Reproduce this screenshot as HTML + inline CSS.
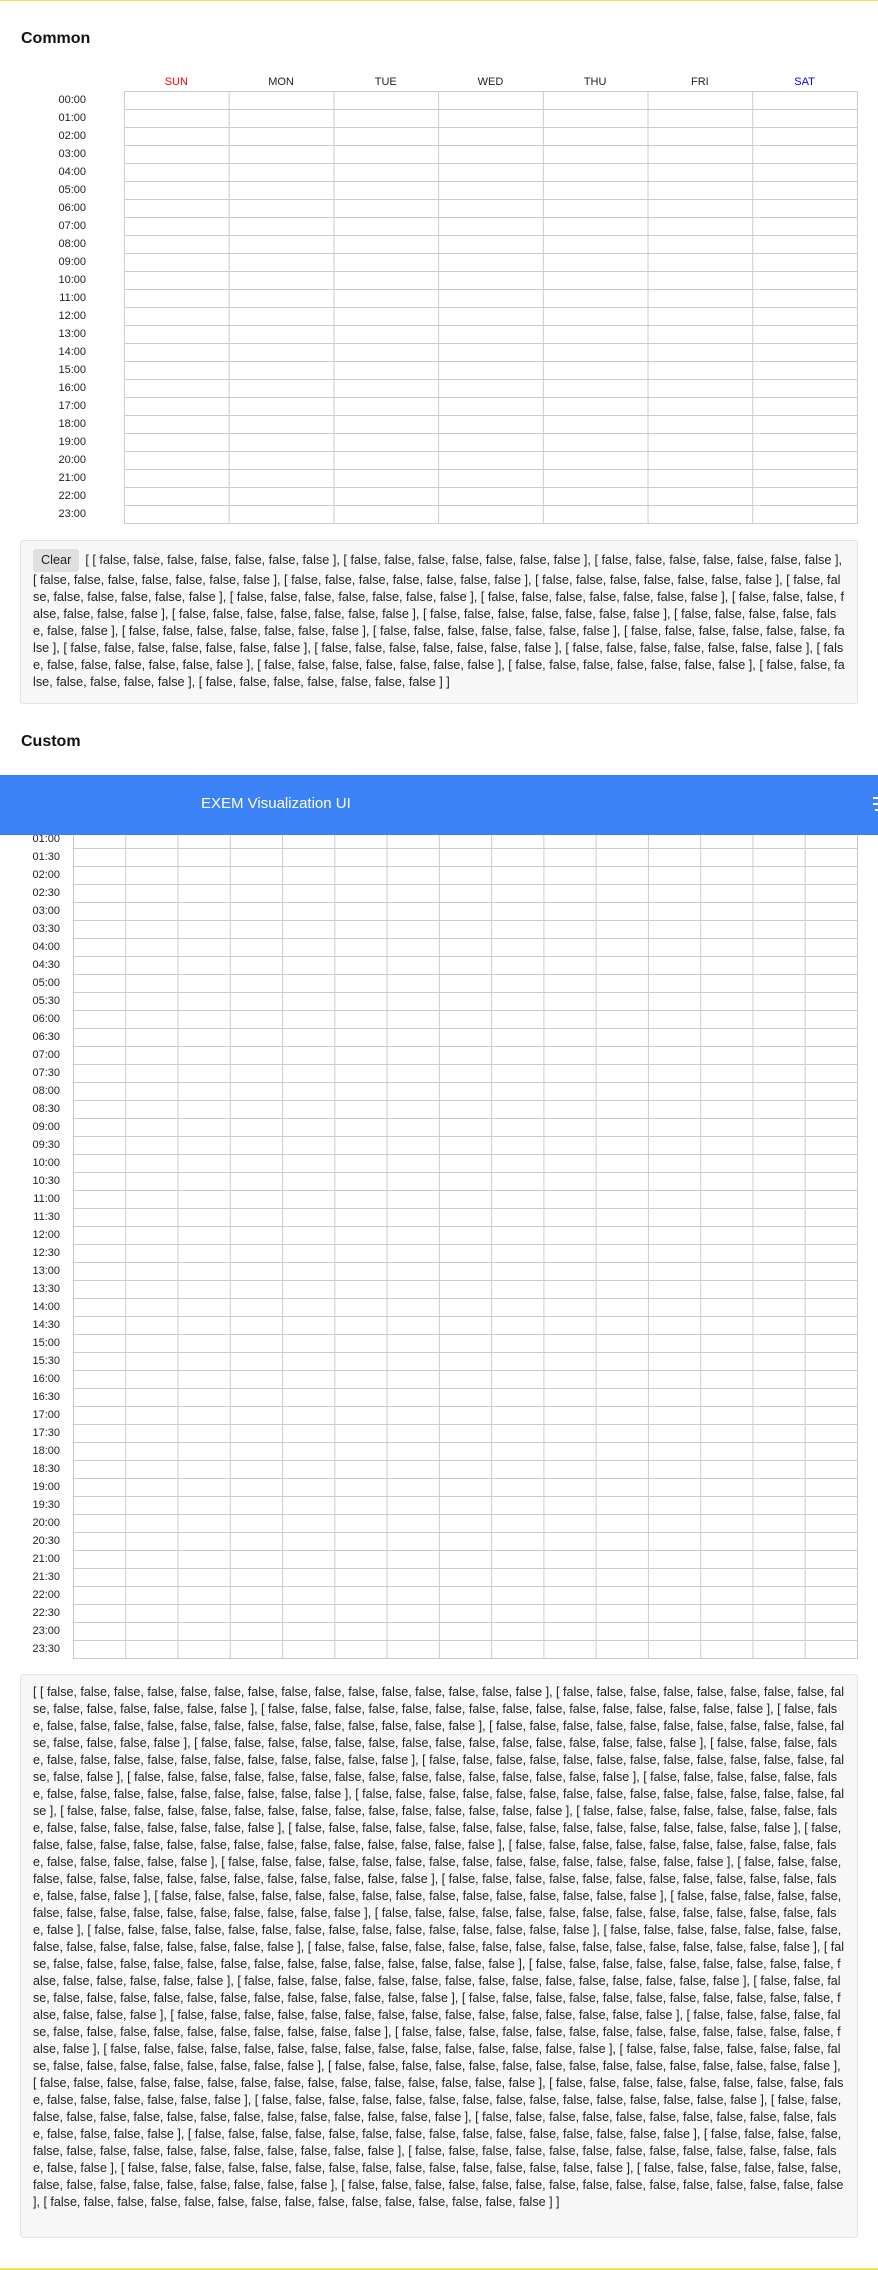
<!DOCTYPE html>
<html><head><meta charset="utf-8"><style>
*{margin:0;padding:0;box-sizing:border-box}
body{width:878px;height:2270px;position:relative;background:#fff;font-family:"Liberation Sans",sans-serif;color:#222;overflow:hidden}
.yl{position:absolute;left:0;width:878px;background:#f7e15a}
h3{position:absolute;left:21px;font-size:16px;font-weight:bold;color:#111;line-height:18px}
.grid{position:absolute;border-right:1px solid #ccc;border-bottom:1px solid #ccc;
background-image:linear-gradient(to right,#ccc 1px,transparent 1px),linear-gradient(to bottom,#ccc 1px,transparent 1px)}
.lab{position:absolute;left:0;font-size:11px;height:18px;line-height:18px;text-align:right;color:#222}
.day{position:absolute;top:74px;width:104.7px;text-align:center;font-size:11px;line-height:16px}
.box{position:absolute;left:20px;width:838px;background:#f7f7f7;border:1px solid #e3e3e3;border-radius:3px;font-size:12.7px;line-height:17px;word-break:break-all;color:#222}
.btn{display:inline-block;background:#e0e0e0;border-radius:3px;padding:0 8px;height:23px;line-height:23px;font-size:12.7px;margin-right:6px;vertical-align:middle}
</style></head><body>
<div class="yl" style="top:0;height:1px"></div>
<h3 style="top:30px">Common</h3>
<div class="day" style="left:124px;color:#f00">SUN</div>
<div class="day" style="left:228.7px">MON</div>
<div class="day" style="left:333.4px">TUE</div>
<div class="day" style="left:438.1px">WED</div>
<div class="day" style="left:542.8px">THU</div>
<div class="day" style="left:647.5px">FRI</div>
<div class="day" style="left:752.2px;color:#00f">SAT</div>
<div class="grid" style="left:124px;top:91px;width:734px;height:433px;background-size:104.71px 100%,100% 18px"></div>
<div style="position:absolute;left:0;top:91px;width:86px">
<div class="lab" style="position:static;width:86px">00:00</div><div class="lab" style="position:static;width:86px">01:00</div><div class="lab" style="position:static;width:86px">02:00</div><div class="lab" style="position:static;width:86px">03:00</div><div class="lab" style="position:static;width:86px">04:00</div><div class="lab" style="position:static;width:86px">05:00</div><div class="lab" style="position:static;width:86px">06:00</div><div class="lab" style="position:static;width:86px">07:00</div><div class="lab" style="position:static;width:86px">08:00</div><div class="lab" style="position:static;width:86px">09:00</div><div class="lab" style="position:static;width:86px">10:00</div><div class="lab" style="position:static;width:86px">11:00</div><div class="lab" style="position:static;width:86px">12:00</div><div class="lab" style="position:static;width:86px">13:00</div><div class="lab" style="position:static;width:86px">14:00</div><div class="lab" style="position:static;width:86px">15:00</div><div class="lab" style="position:static;width:86px">16:00</div><div class="lab" style="position:static;width:86px">17:00</div><div class="lab" style="position:static;width:86px">18:00</div><div class="lab" style="position:static;width:86px">19:00</div><div class="lab" style="position:static;width:86px">20:00</div><div class="lab" style="position:static;width:86px">21:00</div><div class="lab" style="position:static;width:86px">22:00</div><div class="lab" style="position:static;width:86px">23:00</div>
</div>
<div class="box" style="top:540px;height:164px;padding:8px 12px 0 12px"><span class="btn">Clear</span>[ [ false, false, false, false, false, false, false ], [ false, false, false, false, false, false, false ], [ false, false, false, false, false, false, false ], [ false, false, false, false, false, false, false ], [ false, false, false, false, false, false, false ], [ false, false, false, false, false, false, false ], [ false, false, false, false, false, false, false ], [ false, false, false, false, false, false, false ], [ false, false, false, false, false, false, false ], [ false, false, false, false, false, false, false ], [ false, false, false, false, false, false, false ], [ false, false, false, false, false, false, false ], [ false, false, false, false, false, false, false ], [ false, false, false, false, false, false, false ], [ false, false, false, false, false, false, false ], [ false, false, false, false, false, false, false ], [ false, false, false, false, false, false, false ], [ false, false, false, false, false, false, false ], [ false, false, false, false, false, false, false ], [ false, false, false, false, false, false, false ], [ false, false, false, false, false, false, false ], [ false, false, false, false, false, false, false ], [ false, false, false, false, false, false, false ], [ false, false, false, false, false, false, false ] ]</div>
<h3 style="top:733px">Custom</h3>
<div class="grid" style="left:73px;top:794px;width:785px;height:865px;background-size:52.27px 100%,100% 18px"></div>
<div style="position:absolute;left:0;top:830px;width:60px">
<div class="lab" style="position:static;width:60px">01:00</div><div class="lab" style="position:static;width:60px">01:30</div><div class="lab" style="position:static;width:60px">02:00</div><div class="lab" style="position:static;width:60px">02:30</div><div class="lab" style="position:static;width:60px">03:00</div><div class="lab" style="position:static;width:60px">03:30</div><div class="lab" style="position:static;width:60px">04:00</div><div class="lab" style="position:static;width:60px">04:30</div><div class="lab" style="position:static;width:60px">05:00</div><div class="lab" style="position:static;width:60px">05:30</div><div class="lab" style="position:static;width:60px">06:00</div><div class="lab" style="position:static;width:60px">06:30</div><div class="lab" style="position:static;width:60px">07:00</div><div class="lab" style="position:static;width:60px">07:30</div><div class="lab" style="position:static;width:60px">08:00</div><div class="lab" style="position:static;width:60px">08:30</div><div class="lab" style="position:static;width:60px">09:00</div><div class="lab" style="position:static;width:60px">09:30</div><div class="lab" style="position:static;width:60px">10:00</div><div class="lab" style="position:static;width:60px">10:30</div><div class="lab" style="position:static;width:60px">11:00</div><div class="lab" style="position:static;width:60px">11:30</div><div class="lab" style="position:static;width:60px">12:00</div><div class="lab" style="position:static;width:60px">12:30</div><div class="lab" style="position:static;width:60px">13:00</div><div class="lab" style="position:static;width:60px">13:30</div><div class="lab" style="position:static;width:60px">14:00</div><div class="lab" style="position:static;width:60px">14:30</div><div class="lab" style="position:static;width:60px">15:00</div><div class="lab" style="position:static;width:60px">15:30</div><div class="lab" style="position:static;width:60px">16:00</div><div class="lab" style="position:static;width:60px">16:30</div><div class="lab" style="position:static;width:60px">17:00</div><div class="lab" style="position:static;width:60px">17:30</div><div class="lab" style="position:static;width:60px">18:00</div><div class="lab" style="position:static;width:60px">18:30</div><div class="lab" style="position:static;width:60px">19:00</div><div class="lab" style="position:static;width:60px">19:30</div><div class="lab" style="position:static;width:60px">20:00</div><div class="lab" style="position:static;width:60px">20:30</div><div class="lab" style="position:static;width:60px">21:00</div><div class="lab" style="position:static;width:60px">21:30</div><div class="lab" style="position:static;width:60px">22:00</div><div class="lab" style="position:static;width:60px">22:30</div><div class="lab" style="position:static;width:60px">23:00</div><div class="lab" style="position:static;width:60px">23:30</div>
</div>
<div style="position:absolute;left:0;top:775px;width:878px;height:60px;background:#3b82f6"></div>
<div style="position:absolute;left:201px;top:794px;color:#fff;font-size:15px;line-height:20px">EXEM Visualization UI</div>
<div style="position:absolute;left:873px;top:797px;width:5px;height:2px;background:#fff"></div>
<div style="position:absolute;left:873px;top:803px;width:5px;height:2px;background:#fff"></div>
<div style="position:absolute;left:875px;top:809px;width:3px;height:2px;background:#fff"></div>
<div class="box" style="top:1674px;height:564px;padding:9px 12px 0 12px;font-size:12.55px">[ [ false, false, false, false, false, false, false, false, false, false, false, false, false, false, false ], [ false, false, false, false, false, false, false, false, false, false, false, false, false, false, false ], [ false, false, false, false, false, false, false, false, false, false, false, false, false, false, false ], [ false, false, false, false, false, false, false, false, false, false, false, false, false, false, false ], [ false, false, false, false, false, false, false, false, false, false, false, false, false, false, false ], [ false, false, false, false, false, false, false, false, false, false, false, false, false, false, false ], [ false, false, false, false, false, false, false, false, false, false, false, false, false, false, false ], [ false, false, false, false, false, false, false, false, false, false, false, false, false, false, false ], [ false, false, false, false, false, false, false, false, false, false, false, false, false, false, false ], [ false, false, false, false, false, false, false, false, false, false, false, false, false, false, false ], [ false, false, false, false, false, false, false, false, false, false, false, false, false, false, false ], [ false, false, false, false, false, false, false, false, false, false, false, false, false, false, false ], [ false, false, false, false, false, false, false, false, false, false, false, false, false, false, false ], [ false, false, false, false, false, false, false, false, false, false, false, false, false, false, false ], [ false, false, false, false, false, false, false, false, false, false, false, false, false, false, false ], [ false, false, false, false, false, false, false, false, false, false, false, false, false, false, false ], [ false, false, false, false, false, false, false, false, false, false, false, false, false, false, false ], [ false, false, false, false, false, false, false, false, false, false, false, false, false, false, false ], [ false, false, false, false, false, false, false, false, false, false, false, false, false, false, false ], [ false, false, false, false, false, false, false, false, false, false, false, false, false, false, false ], [ false, false, false, false, false, false, false, false, false, false, false, false, false, false, false ], [ false, false, false, false, false, false, false, false, false, false, false, false, false, false, false ], [ false, false, false, false, false, false, false, false, false, false, false, false, false, false, false ], [ false, false, false, false, false, false, false, false, false, false, false, false, false, false, false ], [ false, false, false, false, false, false, false, false, false, false, false, false, false, false, false ], [ false, false, false, false, false, false, false, false, false, false, false, false, false, false, false ], [ false, false, false, false, false, false, false, false, false, false, false, false, false, false, false ], [ false, false, false, false, false, false, false, false, false, false, false, false, false, false, false ], [ false, false, false, false, false, false, false, false, false, false, false, false, false, false, false ], [ false, false, false, false, false, false, false, false, false, false, false, false, false, false, false ], [ false, false, false, false, false, false, false, false, false, false, false, false, false, false, false ], [ false, false, false, false, false, false, false, false, false, false, false, false, false, false, false ], [ false, false, false, false, false, false, false, false, false, false, false, false, false, false, false ], [ false, false, false, false, false, false, false, false, false, false, false, false, false, false, false ], [ false, false, false, false, false, false, false, false, false, false, false, false, false, false, false ], [ false, false, false, false, false, false, false, false, false, false, false, false, false, false, false ], [ false, false, false, false, false, false, false, false, false, false, false, false, false, false, false ], [ false, false, false, false, false, false, false, false, false, false, false, false, false, false, false ], [ false, false, false, false, false, false, false, false, false, false, false, false, false, false, false ], [ false, false, false, false, false, false, false, false, false, false, false, false, false, false, false ], [ false, false, false, false, false, false, false, false, false, false, false, false, false, false, false ], [ false, false, false, false, false, false, false, false, false, false, false, false, false, false, false ], [ false, false, false, false, false, false, false, false, false, false, false, false, false, false, false ], [ false, false, false, false, false, false, false, false, false, false, false, false, false, false, false ], [ false, false, false, false, false, false, false, false, false, false, false, false, false, false, false ], [ false, false, false, false, false, false, false, false, false, false, false, false, false, false, false ], [ false, false, false, false, false, false, false, false, false, false, false, false, false, false, false ], [ false, false, false, false, false, false, false, false, false, false, false, false, false, false, false ] ]</div>
<div class="yl" style="top:2268px;height:2px"></div>
</body></html>
